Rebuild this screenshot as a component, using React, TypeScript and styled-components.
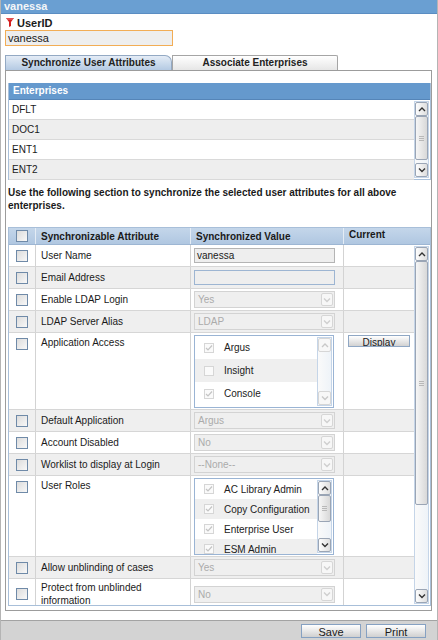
import { FC } from "react";
import styled, { createGlobalStyle } from "styled-components";

const GlobalStyle = createGlobalStyle`
  html, body { margin: 0; padding: 0; background: #fff; }
  body {
    font-family: "Liberation Sans", Arial, sans-serif;
    font-size: 10px;
    color: #1a1a1a;
  }
`;

type RowKind = "input" | "email" | "select" | "apps" | "roles";

interface IRow {
  label: string;
  kind: RowKind;
  value?: string;
}

const enterprises = ["DFLT", "DOC1", "ENT1", "ENT2"];

const rows: IRow[] = [
  { label: "User Name", kind: "input", value: "vanessa" },
  { label: "Email Address", kind: "email" },
  { label: "Enable LDAP Login", kind: "select", value: "Yes" },
  { label: "LDAP Server Alias", kind: "select", value: "LDAP" },
  { label: "Application Access", kind: "apps" },
  { label: "Default Application", kind: "select", value: "Argus" },
  { label: "Account Disabled", kind: "select", value: "No" },
  { label: "Worklist to display at Login", kind: "select", value: "--None--" },
  { label: "User Roles", kind: "roles" },
  { label: "Allow unblinding of cases", kind: "select", value: "Yes" },
  { label: "Protect from unblinded information", kind: "select", value: "No" },
];

const apps = [
  { name: "Argus", checked: true },
  { name: "Insight", checked: false },
  { name: "Console", checked: true },
];

const roles = ["AC Library Admin", "Copy Configuration", "Enterprise User", "ESM Admin"];

const Chevron: FC<{ up?: boolean; color?: string }> = ({ up, color = "#333" }) => (
  <svg width="8" height="6" viewBox="0 0 8 6">
    <path
      d={up ? "M1 5 L4 2 L7 5" : "M1 1.5 L4 4.5 L7 1.5"}
      fill="none"
      stroke={color}
      strokeWidth="1.4"
    />
  </svg>
);

const FilterIcon = () => (
  <svg width="8" height="9" viewBox="0 0 8 9">
    <path d="M0 0 H8 L5 4 V8 L3 9 V4 Z" fill="#d42020" />
    <path d="M1 1 H7" stroke="#f08080" strokeWidth="1" />
  </svg>
);

const DisabledCheck: FC<{ checked?: boolean }> = ({ checked }) => (
  <CheckMini>
    {checked && (
      <svg width="8" height="8" viewBox="0 0 8 8">
        <path d="M1 4 L3 6 L7 1.5" fill="none" stroke="#c4c4c4" strokeWidth="1.2" />
      </svg>
    )}
  </CheckMini>
);

const Scrollbar: FC<{ thumb?: number; disabled?: boolean }> = ({ thumb = 0, disabled }) => (
  <Bar>
    <BarBtn disabled={disabled}>
      <Chevron up color={disabled ? "#c8c8c8" : "#333"} />
    </BarBtn>
    {thumb > 0 && (
      <Thumb style={{ height: thumb }}>
        <Grip />
      </Thumb>
    )}
    <Track />
    <BarBtn disabled={disabled}>
      <Chevron color={disabled ? "#c8c8c8" : "#333"} />
    </BarBtn>
  </Bar>
);

const SelectBox: FC<{ value: string }> = ({ value }) => (
  <Select>
    {value}
    <SelectBtn>
      <Chevron color="#cfcfcf" />
    </SelectBtn>
  </Select>
);

const ValueCell: FC<{ row: IRow }> = ({ row }) => {
  if (row.kind === "input") return <TextBox>{row.value}</TextBox>;
  if (row.kind === "email") return <TextBox email />;
  if (row.kind === "select") return <SelectBox value={row.value ?? ""} />;
  if (row.kind === "apps")
    return (
      <ListBox height={73}>
        <ListItems>
          {apps.map((a, i) => (
            <ListItem key={a.name} odd={i % 2 === 1} h={23}>
              <DisabledCheck checked={a.checked} />
              {a.name}
            </ListItem>
          ))}
        </ListItems>
        <Scrollbar disabled />
      </ListBox>
    );
  return (
    <ListBox height={77}>
      <ListItems>
        {roles.map((r, i) => (
          <ListItem key={r} odd={i % 2 === 1} h={20}>
            <DisabledCheck checked />
            {r}
          </ListItem>
        ))}
      </ListItems>
      <Scrollbar thumb={27} />
    </ListBox>
  );
};

export default function App() {
  return (
    <>
      <GlobalStyle />
      <Page>
        <TitleBar>vanessa</TitleBar>
        <Body>
          <FieldLabel>
            <FilterIcon />
            UserID
          </FieldLabel>
          <UserInput>vanessa</UserInput>

          <Tabs>
            <Tab active>Synchronize User Attributes</Tab>
            <Tab>Associate Enterprises</Tab>
          </Tabs>

          <Panel>
            <EntBox>
              <EntHeader>Enterprises</EntHeader>
              <EntList>
                <EntRows>
                  {enterprises.map((e, i) => (
                    <EntRow key={e} odd={i % 2 === 1}>
                      {e}
                    </EntRow>
                  ))}
                </EntRows>
                <Scrollbar thumb={44} />
              </EntList>
            </EntBox>

            <Note>
              Use the following section to synchronize the selected user attributes for all above
              enterprises.
            </Note>

            <Grid>
              <GridHead>
                <HeadCell center>
                  <Check />
                </HeadCell>
                <HeadCell>Synchronizable Attribute</HeadCell>
                <HeadCell>Synchronized Value</HeadCell>
                <HeadCell top>Current</HeadCell>
              </GridHead>
              <GridBody>
                <Rows>
                  {rows.map((r, i) => {
                    const tall = r.kind === "apps" || r.kind === "roles";
                    return (
                      <Row key={r.label} odd={i % 2 === 1}>
                        <Cell kind="check" tall={tall}>
                          <Check />
                        </Cell>
                        <Cell kind="label" tall={tall}>
                          {r.label}
                        </Cell>
                        <Cell kind="value" tall={tall}>
                          <ValueCell row={r} />
                        </Cell>
                        <Cell kind="current" tall={tall}>
                          {r.kind === "apps" && <SmallButton>Display</SmallButton>}
                        </Cell>
                      </Row>
                    );
                  })}
                </Rows>
                <Scrollbar thumb={244} />
              </GridBody>
            </Grid>
          </Panel>
        </Body>
        <Footer>
          <Button>Save</Button>
          <Button>Print</Button>
        </Footer>
      </Page>
    </>
  );
}

const Page = styled.div`
  width: 438px;
  height: 640px;
  box-sizing: border-box;
  border-left: 1px solid #b4b4b4;
  border-right: 1px solid #b4b4b4;
  display: flex;
  flex-direction: column;
  overflow: hidden;
`;
const TitleBar = styled.div`
  height: 13px;
  line-height: 12px;
  background: #6a9fd2;
  border-bottom: 1px solid #5a8dc2;
  color: #f4f6f8;
  font-weight: bold;
  font-size: 11px;
  padding-left: 3px;
`;
const Body = styled.div`
  padding: 3px 5px 0 4px;
`;
const FieldLabel = styled.div`
  display: flex;
  align-items: center;
  gap: 3px;
  height: 11px;
  font-weight: bold;
  font-size: 11px;
  padding-left: 1px;
`;
const UserInput = styled.div`
  margin-top: 2px;
  width: 168px;
  height: 16px;
  box-sizing: border-box;
  border: 1px solid #f2ad55;
  background: #eeeeee;
  font-size: 11px;
  line-height: 14px;
  padding-left: 2px;
`;
const Tabs = styled.div`
  display: flex;
  margin-top: 9px;
  height: 15px;
`;
const Tab = styled.div<{ active?: boolean }>`
  width: ${(p) => (p.active ? 167 : 166)}px;
  box-sizing: border-box;
  border: 1px solid ${(p) => (p.active ? "#93a9c3" : "#a5a5a5")};
  border-bottom: none;
  border-top-right-radius: ${(p) => (p.active ? 7 : 2)}px;
  background: ${(p) =>
    p.active
      ? "linear-gradient(#e4ecf6, #b4cae3)"
      : "linear-gradient(#ffffff, #e6e6e6)"};
  font-weight: bold;
  font-size: 10px;
  line-height: 14px;
  text-align: center;
  color: #222;
`;
const Panel = styled.div`
  height: 541px;
  box-sizing: border-box;
  border: 1px solid #9c9c9c;
  padding: 12px 0 0 2px;
`;
const EntBox = styled.div`
  border: 1px solid #a9c0da;
  border-top: none;
`;
const EntHeader = styled.div`
  height: 16px;
  background: #6599cd;
  border-bottom: 1px solid #5585b8;
  color: #fff;
  font-weight: bold;
  font-size: 10px;
  line-height: 16px;
  padding-left: 4px;
`;
const EntList = styled.div`
  display: flex;
  height: 79px;
`;
const EntRows = styled.div`
  flex: 1;
`;
const EntRow = styled.div<{ odd?: boolean }>`
  height: 20px;
  box-sizing: border-box;
  border-bottom: 1px solid #d9d9d9;
  background: ${(p) => (p.odd ? "#eeeeee" : "#fff")};
  line-height: 20px;
  padding-left: 3px;
  font-size: 10px;
`;
const Bar = styled.div`
  width: 15px;
  margin: 1px 1px 1px 0;
  display: flex;
  flex-direction: column;
  background: linear-gradient(90deg, #fafafa, #eef3f8);
  border: 1px solid #c5d5e8;
  box-sizing: border-box;
`;
const BarBtn = styled.div<{ disabled?: boolean }>`
  height: 14px;
  box-sizing: border-box;
  border: 1px solid ${(p) => (p.disabled ? "#d6d6d6" : "#9aa5b5")};
  border-radius: 2px;
  background: ${(p) =>
    p.disabled ? "#f7f7f7" : "linear-gradient(90deg, #fdfdfd, #dedede)"};
  display: flex;
  align-items: center;
  justify-content: center;
`;
const Thumb = styled.div`
  box-sizing: border-box;
  border: 1px solid #9aa5b5;
  border-radius: 2px;
  background: linear-gradient(90deg, #f6f6f6, #d8d8d8);
  display: flex;
  align-items: center;
  justify-content: center;
`;
const Grip = styled.div`
  width: 5px;
  height: 5px;
  border-top: 1px solid #b8b8b8;
  border-bottom: 1px solid #b8b8b8;
  box-sizing: border-box;
  position: relative;
  &::after {
    content: "";
    position: absolute;
    left: 0;
    right: 0;
    top: 1px;
    border-top: 1px solid #b8b8b8;
  }
`;
const Track = styled.div`
  flex: 1;
`;
const Note = styled.div`
  margin-top: 6px;
  font-weight: bold;
  font-size: 10px;
  line-height: 13px;
  padding-right: 6px;
`;
const Grid = styled.div`
  margin-top: 15px;
  border: 1px solid #a8bfd9;
`;
const cols = "27px 155px 153px 1fr";
const GridHead = styled.div`
  display: grid;
  grid-template-columns: ${cols};
  height: 16px;
  background: linear-gradient(#c4d6ea, #b0c7e1);
  border-bottom: 1px solid #9db6d3;
`;
const HeadCell = styled.div<{ center?: boolean; top?: boolean }>`
  display: flex;
  align-items: ${(p) => (p.top ? "flex-start" : "center")};
  justify-content: ${(p) => (p.center ? "center" : "flex-start")};
  padding-left: ${(p) => (p.center ? 0 : 5)}px;
  border-right: 1px solid #e4ecf5;
  font-weight: bold;
  font-size: 10px;
  line-height: 13px;
  &:last-child { border-right: none; }
`;
const GridBody = styled.div`
  display: flex;
  height: 360px;
  overflow: hidden;
`;
const Rows = styled.div`
  flex: 1;
`;
const Row = styled.div<{ odd?: boolean }>`
  display: grid;
  grid-template-columns: ${cols};
  min-height: 22px;
  box-sizing: border-box;
  border-bottom: 1px solid #d6d6d6;
  background: ${(p) => (p.odd ? "#efefef" : "#fff")};
`;

type CellKind = "check" | "label" | "value" | "current";

const cellPadding: Record<CellKind, [string, string]> = {
  check: ["0", "5px 0 0 0"],
  label: ["2px 4px 2px 5px", "3px 4px 0 5px"],
  value: ["2px 0 2px 3px", "2px 0 1px 3px"],
  current: ["2px 0 0 4px", "2px 0 0 4px"],
};

const Cell = styled.div<{ kind: CellKind; tall?: boolean }>`
  display: flex;
  align-items: ${(p) => (p.tall ? "flex-start" : "center")};
  justify-content: ${(p) => (p.kind === "check" ? "center" : "flex-start")};
  border-right: ${(p) => (p.kind === "current" ? "none" : "1px solid #d3d3d3")};
  padding: ${(p) => cellPadding[p.kind][p.tall ? 1 : 0]};
  font-size: 10px;
  line-height: 13px;
`;
const Check = styled.span`
  width: 12px;
  height: 12px;
  box-sizing: border-box;
  border: 1px solid #6f8aa8;
  background: linear-gradient(135deg, #dcdcdc, #f8f8f8);
`;
const CheckMini = styled.span`
  width: 10px;
  height: 10px;
  box-sizing: border-box;
  border: 1px solid #d6d6d6;
  background: #fafafa;
  display: flex;
  align-items: center;
  justify-content: center;
  margin: 0 10px 0 9px;
`;
const TextBox = styled.div<{ email?: boolean }>`
  width: 141px;
  height: 15px;
  box-sizing: border-box;
  border: 1px solid ${(p) => (p.email ? "#9db5d2" : "#b4b4b4")};
  background: #eeeeee;
  font-size: 10px;
  line-height: 13px;
  padding-left: 2px;
`;
const Select = styled.div`
  width: 141px;
  height: 17px;
  box-sizing: border-box;
  border: 1px solid #d3d3d3;
  background: #efefef;
  color: #ababab;
  display: flex;
  align-items: center;
  padding-left: 3px;
  font-size: 10px;
`;
const SelectBtn = styled.span`
  margin-left: auto;
  margin-right: 1px;
  width: 12px;
  height: 13px;
  box-sizing: border-box;
  border: 1px solid #d6d6d6;
  border-radius: 2px;
  background: #f7f7f7;
  display: flex;
  align-items: center;
  justify-content: center;
`;
const ListBox = styled.div<{ height: number }>`
  width: 140px;
  height: ${(p) => p.height}px;
  box-sizing: border-box;
  border: 1px solid #9ab4d4;
  background: #fff;
  display: flex;
  overflow: hidden;
`;
const ListItems = styled.div`
  flex: 1;
`;
const ListItem = styled.div<{ odd?: boolean; h: number }>`
  height: ${(p) => p.h}px;
  display: flex;
  align-items: center;
  background: ${(p) => (p.odd ? "#efefef" : "#fff")};
  font-size: 10px;
  color: #222;
`;
const SmallButton = styled.div`
  width: 62px;
  height: 12px;
  box-sizing: border-box;
  border: 1px solid #8fa7c4;
  background: linear-gradient(#ffffff, #d2d2d2);
  font-size: 10px;
  line-height: 13px;
  text-align: center;
  overflow: hidden;
`;
const Footer = styled.div`
  margin-top: auto;
  height: 20px;
  box-sizing: border-box;
  border-top: 1px solid #a3a3a3;
  background: #d3d3d3;
  display: flex;
  justify-content: flex-end;
  gap: 5px;
  padding: 3px 11px 0 0;
`;
const Button = styled.div`
  width: 60px;
  height: 14px;
  box-sizing: border-box;
  border: 1px solid #86a1c2;
  background: linear-gradient(#ffffff, #d0d0d0);
  font-size: 11px;
  line-height: 15px;
  text-align: center;
  overflow: hidden;
`;
